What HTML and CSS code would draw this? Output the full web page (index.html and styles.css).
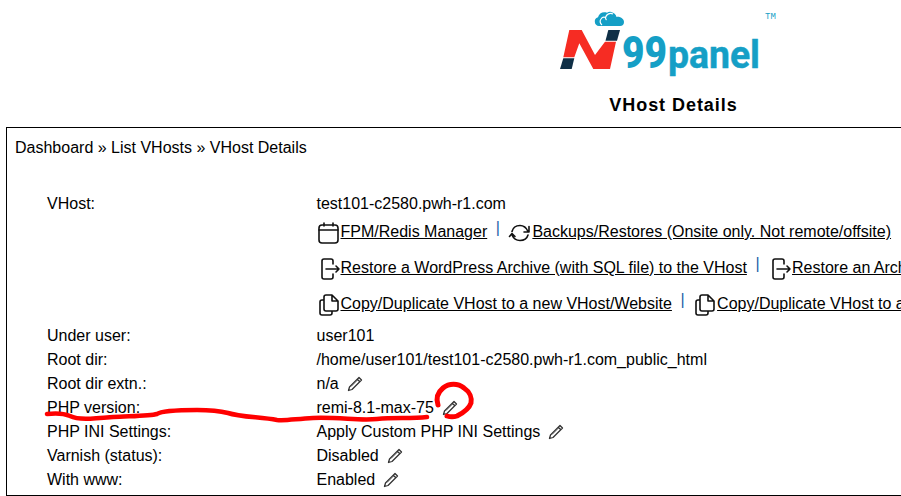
FILE: index.html
```html
<!DOCTYPE html>
<html lang="en">
<head>
<meta charset="utf-8">
<title>VHost Details</title>
<link rel="stylesheet" href="styles.css">
</head>
<body>
<header class="head">
  <svg class="logo" width="210" height="78" viewBox="0 0 210 78">
    <path class="cloud" d="M44 26a4.500 4.500 0 0 1-1-8.800c1-4 5-6 9-4.500 1-.8 2.500-1 4-.8 3 .5 5 2.500 5.500 5 4.500-.5 7.500 2.500 7.500 5 0 2.500-1.500 4.100-4 4.100z"/>
    <path class="white" d="M47 25c-2-1.500-2.500-4-1-6 1-1.500 3-2 4.500-1.500 1-3.500 4.500-5 7.500-3.500M50.500 17.500c0 1 .5 2 1 2.500"/>
    <path class="red" d="M8.300 57.300L14.300 30H26.700L40 55L50 41.700H61L55 69H38.300L24.300 43.300L19.300 57.300Z"/>
    <path class="navy" d="M53.300 30H65L62 40.700H50.500Z"/>
    <path class="navy" d="M5 69H16.700L19.300 58.300H8.300Z"/>
    <text class="logo-nums" x="67" y="68" textLength="45" lengthAdjust="spacingAndGlyphs">99</text>
    <text class="logo-word" x="113" y="68" textLength="92" lengthAdjust="spacingAndGlyphs">panel</text>
  </svg>
  <span class="tm">TM</span>
  <h1 class="title">VHost Details</h1>
</header>
<main class="box">
  <div class="crumbs">Dashboard » List VHosts » VHost Details</div>
  <div class="details">
    <div class="label">VHost:</div>
    <div class="value">test101-c2580.pwh-r1.com</div>
    <div class="links first">
      <svg class="ico" width="24" height="24" viewBox="0 0 24 24"><rect x="2" y="5" width="19" height="18" rx="3"/><path d="M2 10h19M7 3v3M16 3v3"/></svg><a href="#">FPM/Redis Manager</a><span class="sep">|</span>
      <svg class="ico" width="24" height="24" viewBox="0 0 24 24"><path d="M4 11.500C5 7.500 8 5.500 12 5.500c4 0 6.500 2.500 8 6M21 6.500v5.500h-5M20 15c-1 3.500-4 5.500-8 5.500-4 0-6.500-2-8-5.500M1.500 16.500l2.500-3 3 3"/></svg><a href="#">Backups/Restores (Onsite only. Not remote/offsite)</a>
    </div>
    <div class="links">
      <svg class="ico" width="24" height="24" viewBox="0 0 24 24"><path d="M16 8V5a2 2 0 0 0-2-2H7a2 2 0 0 0-2 2v16a2 2 0 0 0 2 2h7a2 2 0 0 0 2-2v-3M9 13h13M19 10l3 3-3 3"/></svg><a href="#">Restore a WordPress Archive (with SQL file) to the VHost</a><span class="sep">|</span>
      <svg class="ico" width="24" height="24" viewBox="0 0 24 24"><path d="M16 8V5a2 2 0 0 0-2-2H7a2 2 0 0 0-2 2v16a2 2 0 0 0 2 2h7a2 2 0 0 0 2-2v-3M9 13h13M19 10l3 3-3 3"/></svg><a href="#">Restore an Archive (with SQL file) to the VHost</a>
    </div>
    <div class="links">
      <svg class="ico" width="24" height="24" viewBox="0 0 24 24"><path d="M9 3h6l6 6v8a2 2 0 0 1-2 2H9a2 2 0 0 1-2-2V5a2 2 0 0 1 2-2zM15 3v6h6M7 8H5a2 2 0 0 0-2 2v11a2 2 0 0 0 2 2h8a2 2 0 0 0 2-2v-2"/></svg><a href="#">Copy/Duplicate VHost to a new VHost/Website</a><span class="sep">|</span>
      <svg class="ico" width="24" height="24" viewBox="0 0 24 24"><path d="M9 3h6l6 6v8a2 2 0 0 1-2 2H9a2 2 0 0 1-2-2V5a2 2 0 0 1 2-2zM15 3v6h6M7 8H5a2 2 0 0 0-2 2v11a2 2 0 0 0 2 2h8a2 2 0 0 0 2-2v-2"/></svg><a href="#">Copy/Duplicate VHost to an existing VHost/Website</a>
    </div>
    <div class="label gap">Under user:</div><div class="value gap">user101</div>
    <div class="label">Root dir:</div><div class="value">/home/user101/test101-c2580.pwh-r1.com_public_html</div>
    <div class="label">Root dir extn.:</div>
    <div class="value">n/a<svg class="pen" width="16" height="16" viewBox="0 0 16 16"><use href="#pencil"/></svg></div>
    <div class="label">PHP version:</div>
    <div class="value">remi-8.1-max-75<svg class="pen" width="16" height="16" viewBox="0 0 16 16"><use href="#pencil"/></svg></div>
    <div class="label">PHP INI Settings:</div>
    <div class="value">Apply Custom PHP INI Settings<svg class="pen" width="16" height="16" viewBox="0 0 16 16"><use href="#pencil"/></svg></div>
    <div class="label">Varnish (status):</div>
    <div class="value">Disabled<svg class="pen" width="16" height="16" viewBox="0 0 16 16"><use href="#pencil"/></svg></div>
    <div class="label">With www:</div>
    <div class="value">Enabled<svg class="pen" width="16" height="16" viewBox="0 0 16 16"><use href="#pencil"/></svg></div>
  </div>
</main>
<svg class="defs" width="0" height="0"><defs><g id="pencil"><path class="pen-out" d="M12 1.500l2.500 2.500L5 13.500l-3.500 1 1-3.500zM10.300 3.200l2.500 2.500"/><path class="pen-in" d="M4 10.500L10.500 4"/></g></defs></svg>
<svg class="marks" width="901" height="496" viewBox="0 0 901 496">
  <path d="M47 414C55 413 63 413 70 416C78 420 90 419 113 417C130 416 150 416 157 414C161 411 175 410 197 410C210 410 220 411 228 413C240 417 260 417 277 420C285 421 295 419 313 418C340 417 360 421 377 419C395 417 410 419 427 417"/>
  <path class="ring" d="M438 405C436 399 437 393 443 388C449 383 458 383 464 388C470 392 472 398 471 403C469 409 463 413 457 416C454 417 450 417 447 416"/>
</svg>
</body>
</html>
```
FILE: styles.css
```css
* { box-sizing: border-box; }
html, body { margin: 0; height: 496px; overflow: hidden; background: #fff; }
body { width: 901px; font-family: "Liberation Sans", Arial, sans-serif; font-size: 16px; color: #000; position: relative; }
.head { height: 127px; display: flex; flex-direction: column; align-items: center; position: relative; padding-left: 446px; }
.logo { display: block; margin-left: -27px; }
.tm { position: absolute; left: 765px; top: 12px; font: 9px "Liberation Mono", monospace; color: #159fc6; }
.title { margin: 17px 0 0; font-size: 18px; line-height: 20px; font-weight: 700; letter-spacing: .95px; color: #000; }
.cloud { fill: #159fc6; }
.white { fill: none; stroke: #fff; stroke-width: 1.200; }
.red { fill: #f62c23; }
.navy { fill: #0f2f46; }
.logo-nums { font: 900 45px "Roboto", sans-serif; fill: #159fc6; }
.logo-word { font: 700 39px "Roboto", sans-serif; fill: #159fc6; stroke: #159fc6; stroke-width: .5px; }
.box { margin-left: 6px; width: 1000px; height: 369px; border: 1px solid #000; padding: 10px 8px; overflow: hidden; }
.crumbs { line-height: 20px; white-space: nowrap; }
.details { display: grid; grid-template-columns: 269.500px 1fr; margin: 34px 0 0 32px; white-space: nowrap; }
.label, .value { line-height: 24px; }
.value { display: flex; align-items: center; }
.gap { margin-top: 2px; }
.links { grid-column: 2; height: 36px; display: flex; align-items: center; }
.links.first { height: 32px; margin-bottom: 2px; }
.links a { color: #000; text-decoration: underline; }
.ico { fill: none; stroke: #111; stroke-width: 1.600; stroke-linecap: round; stroke-linejoin: round; flex: none; }
.sep { color: #1d5fa8; margin: -8px 8.500px 0; }
.pen { margin-left: 8px; flex: none; }
.pen-out { fill: none; stroke: #333; stroke-width: 1.300; stroke-linejoin: round; }
.pen-in { fill: none; stroke: #666; stroke-width: 1; }
.defs { position: absolute; }
.marks { position: absolute; left: 0; top: 0; fill: none; stroke: #f00; stroke-width: 4.500; stroke-linecap: round; stroke-linejoin: round; }
.ring { stroke-width: 5; }
```
